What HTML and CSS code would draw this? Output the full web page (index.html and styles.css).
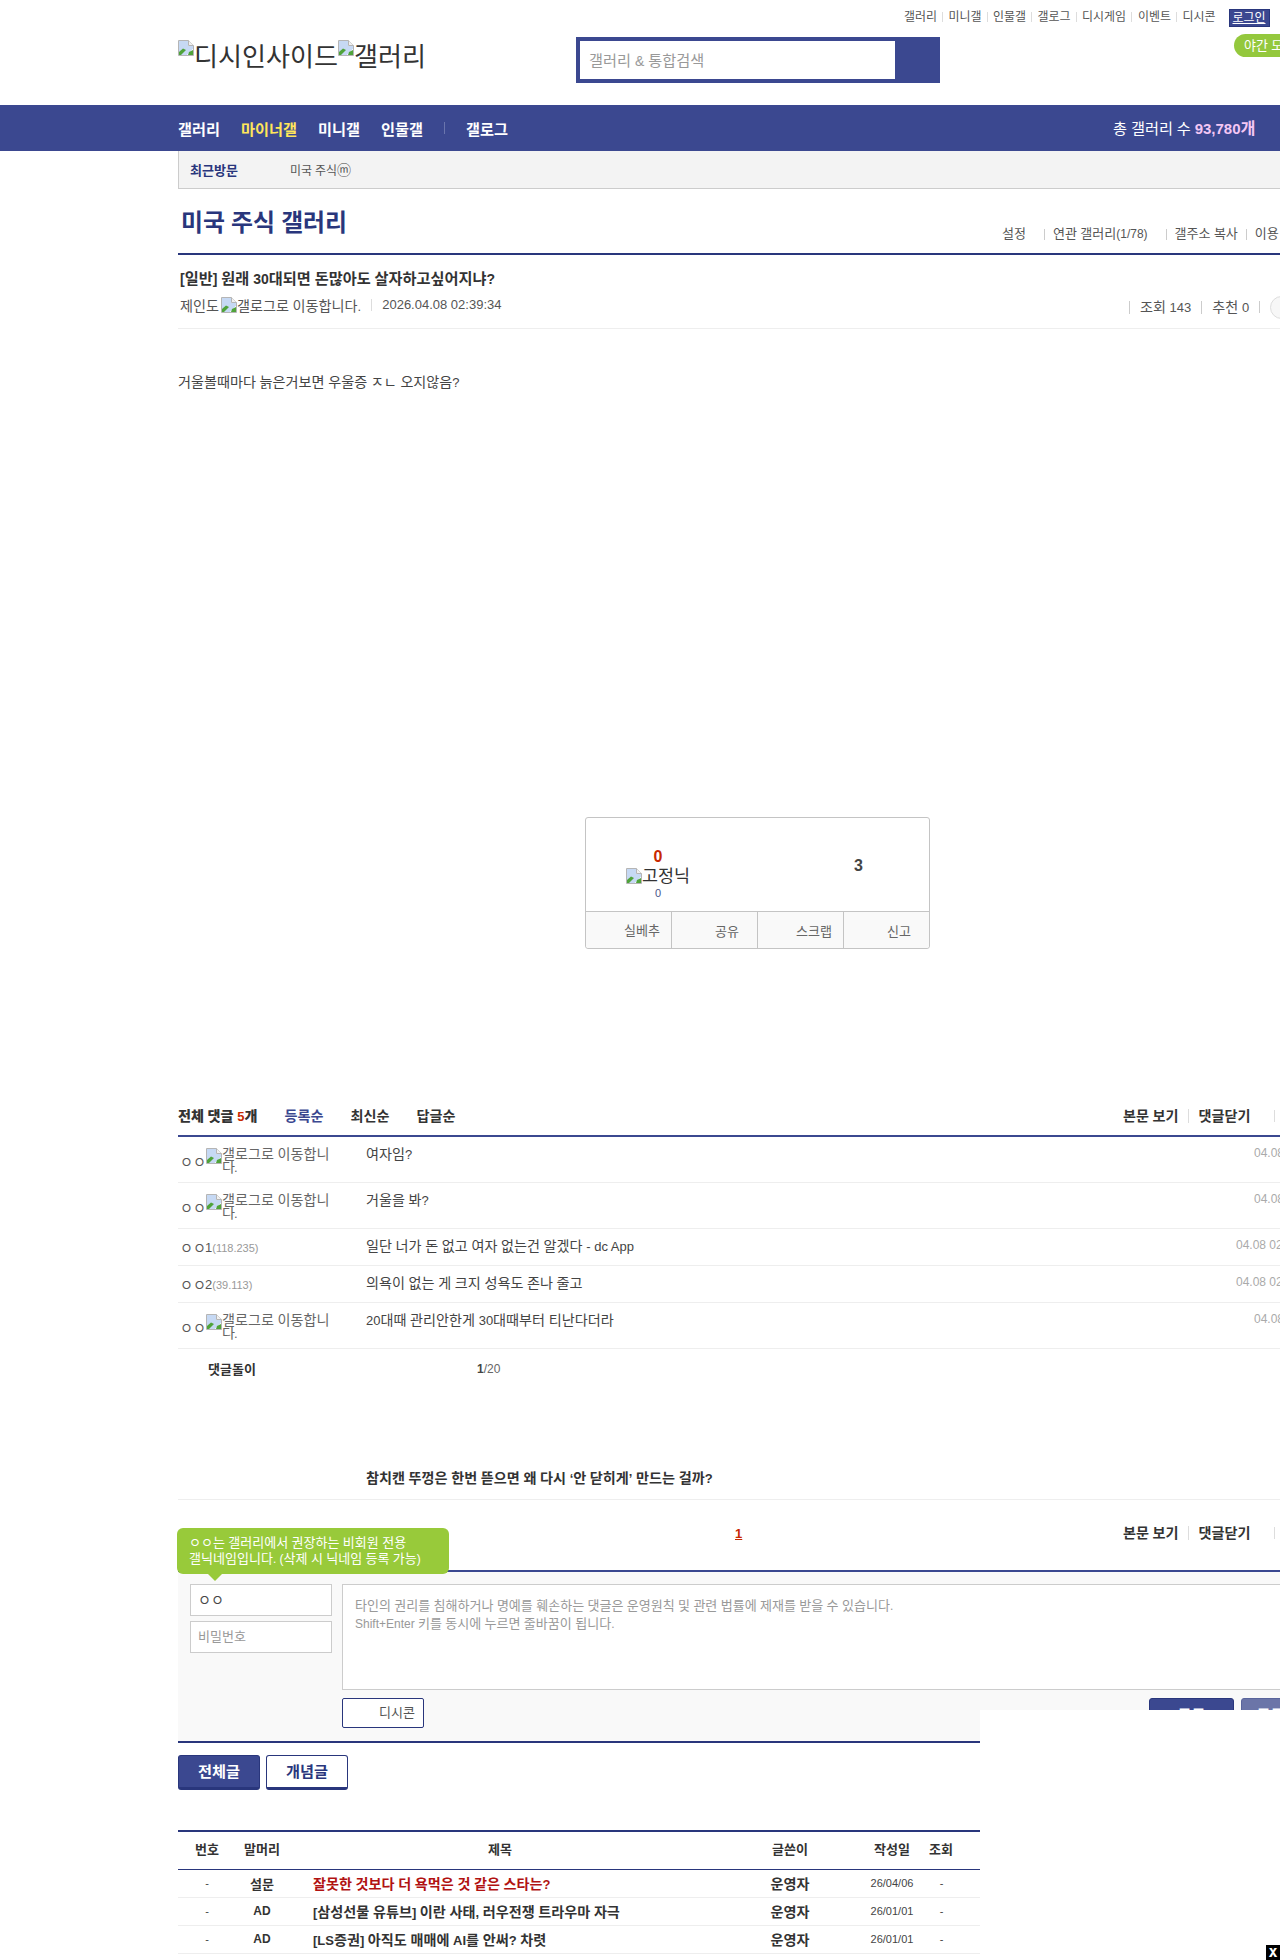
FILE: index.html
```html
<!DOCTYPE html>
<html lang="ko">
<head>
<meta charset="utf-8">
<title>미국 주식 갤러리</title>
<link rel="stylesheet" href="styles.css">
</head>
<body>
<svg class="defs" width="0" height="0" aria-hidden="true"><defs>
<symbol id="broken" viewBox="0 0 16 16">
<path d="M.5.5H10.5L15.5 5.5V15.5H.5Z" fill="#fff" stroke="#b5b5b5"/>
<path d="M1 1H10V6H15V9L9 15H1Z" fill="#c6d9f4"/>
<path d="M1 12L5 8.5L8 10L3 15H1Z" fill="#4fa33a"/>
<path d="M9 15L15 9V15Z" fill="#fff"/>
<path d="M11 12L15 10V15H10Z" fill="#4fa33a"/>
<path d="M10.5.5V5.5H15.5" fill="#f1f1f1" stroke="#b5b5b5"/>
</symbol>
</defs></svg>
<div class="page">
  <header class="head">
    <nav class="toplinks">
      <a>갤러리</a><a>미니갤</a><a>인물갤</a><a>갤로그</a><a>디시게임</a><a>이벤트</a><a class="last">디시콘</a>
      <span class="login">로그인</span>
    </nav>
    <span class="night">야간 모드</span>
    <div class="headrow">
      <div class="logo"><svg class="bi"><use href="#broken"/></svg><span>디시인사이드</span><svg class="bi"><use href="#broken"/></svg><span>갤러리</span></div>
      <div class="search"><span class="search-field">갤러리 <span class="l">&amp;</span> 통합검색</span><span class="search-btn"></span></div>
    </div>
  </header>
  <div class="navbar">
    <div class="navin">
      <a>갤러리</a><a class="on">마이너갤</a><a>미니갤</a><a>인물갤</a><i class="navsep"></i><a>갤로그</a>
      <span class="total">총 갤러리 수 <b><span class="l">93,780</span>개</b></span>
    </div>
  </div>
  <main class="wrap">
    <div class="visit"><b>최근방문</b><span class="vname">미국 주식<span class="mg">ⓜ</span></span></div>
    <div class="gallhead">
      <h1>미국 주식 갤러리</h1>
      <div class="galllinks"><a>설정</a><a>연관 갤러리<span class="l">(1/78)</span></a><a class="tight">갤주소 복사</a><a>이용</a></div>
    </div>
    <div class="posthead">
      <h2><span class="l">[</span>일반<span class="l">]</span> 원래 <span class="l">30</span>대되면 돈많아도 살자하고싶어지냐<span class="l">?</span></h2>
      <div class="postmeta">
        <span class="writer">제인도<svg class="ic"><use href="#broken"/></svg><span>갤로그로 이동합니다<span class="l">.</span></span></span><span class="date">2026.04.08 02:39:34</span>
        <span class="stats"><i>조회 <span class="l">143</span></i><i>추천 <span class="l">0</span></i><i class="empty"></i><u class="circle"></u></span>
      </div>
    </div>
    <p class="body">거울볼때마다 늙은거보면 우울증 ㅈㄴ 오지않음<span class="l">?</span></p>
    <section class="reco">
      <div class="reco-top">
        <div class="up"><b>0</b><span class="fix"><svg class="ic"><use href="#broken"/></svg>고정닉</span><em>0</em></div>
        <b class="down">3</b>
      </div>
      <div class="reco-btns"><span class="r1">실베추</span><span>공유</span><span class="r3">스크랩</span><span>신고</span></div>
    </section>
    <div class="cmthead">
      <b class="cnt">전체 댓글 <s>5</s>개</b><a class="act">등록순</a><a>최신순</a><a>답글순</a>
      <span class="cmtright"><a>본문 보기</a><a>댓글닫기</a><i></i></span>
    </div>
    <ul class="cmts">
      <li class="tall">
        <div class="nick">ㅇㅇ<span class="gl"><svg class="ic"><use href="#broken"/></svg><span class="alt">갤로그로 이동합니다<span class="l">.</span></span></span></div>
        <div class="txt">여자임<span class="l">?</span></div><time class="short">04.08 02:41:12</time>
      </li>
      <li class="tall">
        <div class="nick">ㅇㅇ<span class="gl"><svg class="ic"><use href="#broken"/></svg><span class="alt">갤로그로 이동합니다<span class="l">.</span></span></span></div>
        <div class="txt">거울을 봐<span class="l">?</span></div><time class="short">04.08 02:42:37</time>
      </li>
      <li>
        <div class="nick">ㅇㅇ<span class="l">1</span><small>(118.235)</small></div>
        <div class="txt">일단 너가 돈 없고 여자 없는건 알겠다 <span class="l">- dc App</span></div><time>04.08 02:44:05</time>
      </li>
      <li>
        <div class="nick">ㅇㅇ<span class="l">2</span><small>(39.113)</small></div>
        <div class="txt">의욕이 없는 게 크지 성욕도 존나 줄고</div><time>04.08 02:46:51</time>
      </li>
      <li class="tall">
        <div class="nick">ㅇㅇ<span class="gl"><svg class="ic"><use href="#broken"/></svg><span class="alt">갤로그로 이동합니다<span class="l">.</span></span></span></div>
        <div class="txt"><span class="l">20</span>대때 관리안한게 <span class="l">30</span>대때부터 티난다더라</div><time class="short">04.08 02:49:28</time>
      </li>
    </ul>
    <div class="bot"><b>댓글돌이</b><span class="l"><b>1</b>/20</span></div>
    <div class="adline">참치캔 뚜껑은 한번 뜯으면 왜 다시 <span class="l">‘</span>안 닫히게<span class="l">’</span> 만드는 걸까<span class="l">?</span></div>
    <div class="cmtfoot">
      <a class="pg">1</a>
      <span class="cmtright"><a>본문 보기</a><a>댓글닫기</a><i></i></span>
    </div>
    <section class="write">
      <div class="tip">ㅇㅇ는 갤러리에서 권장하는 비회원 전용<br>갤닉네임입니다<span class="l">. (</span>삭제 시 닉네임 등록 가능<span class="l">)</span></div>
      <div class="wfields">
        <div class="wleft"><span class="inp nickval">ㅇㅇ</span><span class="inp">비밀번호</span></div>
        <div class="area">타인의 권리를 침해하거나 명예를 훼손하는 댓글은 운영원칙 및 관련 법률에 제재를 받을 수 있습니다<span class="l">.</span><br><span class="l">Shift+Enter</span> 키를 동시에 누르면 줄바꿈이 됩니다<span class="l">.</span></div>
      </div>
      <div class="wbtns"><span class="dccon">디시콘</span><span class="reg">등록</span><span class="reg alt2">등록+추천</span></div>
    </section>
    <div class="tabs"><a class="tab on">전체글</a><a class="tab">개념글</a></div>
    <table class="list">
      <colgroup><col class="c1"><col class="c2"><col class="c3"><col class="c4"><col class="c5"><col class="c6"></colgroup>
      <thead><tr><th>번호</th><th>말머리</th><th>제목</th><th>글쓴이</th><th>작성일</th><th class="hit">조회</th></tr></thead>
      <tbody>
        <tr><td class="sm">-</td><td class="b">설문</td><td class="tt red">잘못한 것보다 더 욕먹은 것 같은 스타는<span class="l">?</span></td><td class="b">운영자</td><td class="sm">26/04/06</td><td class="sm hit">-</td></tr>
        <tr><td class="sm">-</td><td class="ad">AD</td><td class="tt"><span class="l">[</span>삼성선물 유튜브<span class="l">]</span> 이란 사태<span class="l">,</span> 러우전쟁 트라우마 자극</td><td class="b">운영자</td><td class="sm">26/01/01</td><td class="sm hit">-</td></tr>
        <tr><td class="sm">-</td><td class="ad">AD</td><td class="tt"><span class="l">[LS</span>증권<span class="l">]</span> 아직도 매매에 <span class="l">AI</span>를 안써<span class="l">?</span> 차렷</td><td class="b">운영자</td><td class="sm">26/01/01</td><td class="sm hit">-</td></tr>
      </tbody>
    </table>
  </main>
</div>
<aside class="adcover"><span class="adx">x</span></aside>
</body>
</html>
```
FILE: styles.css
```css
*{box-sizing:border-box;word-spacing:-.022em}
html,body{margin:0;padding:0;height:1960px;overflow:hidden;background:#fff}
body{position:relative;width:1280px;font-family:"Liberation Sans","Noto Sans CJK KR",sans-serif;font-size:13.04px;color:#333}
a{color:inherit;text-decoration:none}
i,em{font-style:normal}
svg{display:inline-block}
.l{font-size:.92em;word-spacing:0}
.defs{position:absolute}
.page{width:1280px}
.ic,.bi{width:16px;height:16px;flex:none}
.head{position:relative;height:105px;padding-left:178px}
.toplinks{position:absolute;top:9px;left:904px;display:flex;align-items:flex-start;height:18px;font-size:11.96px;color:#555;white-space:nowrap}
.toplinks a{position:relative;margin-right:11.5px;line-height:16px}
.toplinks a:not(.last)::after{content:"";position:absolute;right:-6px;top:3px;height:10px;width:1px;background:#ddd}
.toplinks a:nth-child(5){margin-right:12px}
.toplinks .last{margin-right:13px}
.login{display:block;width:41px;height:18px;line-height:17px;text-align:center;background:#3b4890;border:1px solid #29367c;color:#fff;text-decoration:underline}
.night{position:absolute;left:1234px;top:34px;width:90px;height:23px;line-height:24px;padding-left:10px;border-radius:12px;background:#94c83d;color:#fff;white-space:nowrap}
.headrow{display:flex;height:105px}
.logo{display:flex;align-items:flex-start;width:398px;padding-top:40px;font-size:26.09px;line-height:34px;color:#333;white-space:nowrap}
.search{display:flex;margin-top:37px;width:364px;height:46px;border:4px solid #3b4890;background:#3b4890}
.search-field{width:315px;height:38px;background:#fff;padding-left:9px;line-height:39px;font-size:15.22px;color:#999;white-space:nowrap}
.search-btn{flex:1}
.navbar{height:46px;background:#3b4890;color:#fff}
.navin{display:flex;align-items:center;height:46px;padding-left:178px;font-size:15.22px;font-weight:700;position:relative}
.navin a{margin-right:21px}
.navin a.on{color:#ffe65a}
.navsep{width:1px;height:12px;background:#6a75ad;margin-right:21px}
.total{position:absolute;left:1113px;top:0;line-height:46px;font-weight:400;white-space:nowrap}
.total b{color:#f4c6f4;font-size:16.3px}
.wrap{width:1160px;margin-left:178px}
.visit{display:flex;height:38px;align-items:center;background:#f3f3f3;border-left:1px solid #ccc;border-bottom:1px solid #ccc;padding-left:11px}
.visit b{width:100px;color:#29367c}
.vname{color:#555;font-size:11.96px}
.vname .mg{font-size:14px;line-height:14px}
.gallhead{position:relative;height:66px;border-bottom:2px solid #29367c}
.gallhead h1{margin:0;position:absolute;left:3px;top:19px;font-size:23.9px;line-height:30px;font-weight:700;color:#29367c;white-space:nowrap}
.galllinks{position:absolute;left:824px;top:37px;display:flex;white-space:nowrap;color:#555;line-height:16px}
.galllinks a{position:relative;margin-right:18px}
.galllinks .tight{margin-right:8px}
.galllinks a+a{padding-left:9px}
.galllinks a+a::before{content:"";position:absolute;left:0;top:3px;height:11px;width:1px;background:#ccc}
.posthead{height:74px;border-bottom:1px solid #eee;padding:14px 2px 0}
.posthead h2{margin:0;font-size:15.22px;line-height:20px;font-weight:700;color:#333;white-space:nowrap}
.postmeta{display:flex;align-items:center;height:20px;margin-top:6px;font-size:14.13px;color:#555;position:relative;white-space:nowrap}
.writer{display:flex;align-items:center}
.writer .ic{margin:0 0 0 2px}
.date{margin-left:10px;padding-left:10px;border-left:1px solid #ddd;line-height:12px;font-size:13px;word-spacing:0}
.stats{position:absolute;left:949px;top:2px;display:flex;align-items:center;height:20px}
.stats i{border-left:1px solid #ccc;padding-left:10px;margin-right:10px;line-height:12px}
.stats .empty{height:12px;padding-left:0}
.circle{display:block;width:28px;height:23px;border:1px solid #ddd;border-radius:12px;background:#f7f7f7}
.body{margin:43px 0 0;font-size:14.13px;line-height:20px;color:#444;white-space:nowrap}
.reco{width:345px;height:132px;margin:424px 0 0 407px;border:1px solid #c4c4c4;border-radius:3px;display:flex;flex-direction:column}
.reco-top{position:relative;height:93px;display:flex;flex:none}
.up{position:absolute;left:40px;top:29px;width:64px;display:flex;flex-direction:column;align-items:center;white-space:nowrap}
.up b{font-size:16px;line-height:20px;color:#c82800}
.fix{display:flex;align-items:center;font-size:17.39px;line-height:18px;color:#333}
.up em{font-size:11px;line-height:16px;color:#4a5488}
.down{position:absolute;left:268px;top:38px;font-size:16px;line-height:20px;color:#444}
.reco-btns{display:flex;height:37px;overflow:hidden;background:#f9f9f9;border-top:1px solid #c4c4c4;border-radius:0 0 3px 3px}
.reco-btns span{flex:none;width:86px;text-align:right;padding-right:18px;line-height:40px;color:#666;border-left:1px solid #c4c4c4}
.reco-btns .r1{width:85px;border-left:0;padding-right:11px;line-height:38px}
.reco-btns .r3{padding-right:11px}
.cmthead{position:relative;display:flex;align-items:center;height:46px;margin-top:142px;padding-top:3px;font-size:14.13px;font-weight:700;color:#333;border-bottom:2px solid #3b4890}
.cmthead>a{margin-left:27px}
.cmthead .act{color:#3b4890}
.cnt s{text-decoration:none;color:#c82800;font-size:.92em}
.cmtright{position:absolute;left:945px;top:3px;height:100%;display:flex;align-items:center;white-space:nowrap;font-weight:700;font-size:14.13px;color:#333}
.cmtright a{line-height:14px}
.cmtright a+a{margin-left:9px;padding-left:10px;border-left:1px solid #ddd}
.cmtright i{display:block;width:1px;height:12px;background:#ddd;margin-left:23px}
.cmts{list-style:none;margin:0;padding:0}
.cmts li{position:relative;display:flex;height:37px;border-bottom:1px solid #eee;font-size:14.13px}
.cmts li.tall{height:46px}
.nick{width:188px;padding-left:2px;display:flex;align-items:center;color:#555;white-space:nowrap}
.nick .l{margin-left:-1px}
.nick small{font-size:11px;color:#999;margin-top:2px;word-spacing:0}
.gl{display:flex;width:125px;white-space:normal;line-height:13px}
.alt{display:block;width:109px;color:#666;word-break:break-all}
.tall .nick{align-items:center;padding-top:3px}
.txt{line-height:19px;padding-top:8px;color:#444;white-space:nowrap}
.cmts time{position:absolute;top:8px;left:1058px;font-size:12px;line-height:16px;color:#aaa;white-space:nowrap;word-spacing:0}
.cmts time.short{left:1076px}
.bot{display:flex;height:43px;padding:12px 0 0 30px;color:#666;line-height:18px}
.bot>b{width:269px;color:#333}
.bot span{margin-top:-1px}
.bot span b{color:#444}
.adline{height:108px;padding:76px 0 0 188px;font-size:14.13px;font-weight:700;line-height:20px;color:#333;border-bottom:1px solid #eee;white-space:nowrap}
.cmtfoot{position:relative;height:72px;border-bottom:2px solid #3b4890;padding-left:557px;line-height:68px}
.pg{color:#c82800;font-weight:700;font-size:13px;text-decoration:underline}
.cmtfoot .cmtright{height:66px;top:0}
.write{position:relative;height:171px;background:#f9f9f9;border-bottom:2px solid #29367c;padding:12px 0 0 12px}
.tip{position:absolute;left:-1px;top:-44px;width:272px;height:46px;padding:7px 12px;border-radius:6px;background:#98ca3a;color:#fff;line-height:16px;white-space:nowrap}
.tip::after{content:"";position:absolute;left:31px;top:46px;border:7px solid transparent;border-top-color:#98ca3a;border-bottom:0}
.wfields{display:flex;gap:10px}
.wleft{display:flex;flex-direction:column;gap:5px;width:142px}
.inp{display:block;height:32px;border:1px solid #ccc;background:#fff;padding-left:7px;line-height:30px;color:#999}
.nickval{color:#444;font-size:14.13px}
.area{flex:1;height:106px;border:1px solid #ccc;background:#fff;padding:12px;line-height:18px;color:#999;white-space:nowrap}
.wbtns{position:relative;height:30px;margin-top:8px;padding-left:152px}
.dccon{display:block;width:82px;height:30px;line-height:27px;text-align:right;padding-right:8px;border:1px solid #29367c;border-radius:2px;background:#fff;color:#555}
.reg{position:absolute;left:959px;top:0;width:85px;height:30px;line-height:34px;text-align:center;border:1px solid #29367c;border-radius:3px 3px 0 0;background:#3b4890;color:#fff;font-size:15.22px;font-weight:700;white-space:nowrap}
.alt2{left:1051px;padding-left:11px;background:#6b75a8;border-color:#5a659c}
.tabs{display:flex;gap:6px;margin-top:12px}
.tab{display:block;width:82px;height:35px;line-height:31px;text-align:center;border:1px solid #29367c;border-bottom-width:3px;border-radius:3px;font-size:15.22px;font-weight:700;color:#29367c;background:#fff}
.tab.on{background:#3b4890;color:#fff}
.list{width:802px;margin-top:40px;border-collapse:collapse;table-layout:fixed;border-top:2px solid #29367c}
.c1{width:58px}.c2{width:52px}.c3{width:424px}.c4{width:156px}.c5{width:48px}.c6{width:64px}
.list th{height:38px;padding:0 0 3px;font-weight:700;color:#333;border-bottom:1px solid #29367c;white-space:nowrap}
.list .hit{padding-right:14px}
.list td{height:28px;padding-top:1px;text-align:center;border-bottom:1px solid #eee;font-size:14.13px;color:#333;white-space:nowrap}
.list td.b{font-weight:700}
.list td.sm{font-size:11px;color:#444;word-spacing:0}
.list td:nth-child(2).b{font-size:13.04px}
.list td.ad{font-size:12px;font-weight:700}
.list td.tt{text-align:left;padding-left:25px;font-weight:700}
.list td.red{color:#b11212}
.adcover{position:absolute;left:980px;top:1710px;width:300px;height:250px;background:#fff}
.adx{position:absolute;right:0;bottom:0;width:14px;height:15px;background:#000;color:#fff;font:700 15px/14px "DejaVu Sans Mono",monospace;text-align:center}
```
